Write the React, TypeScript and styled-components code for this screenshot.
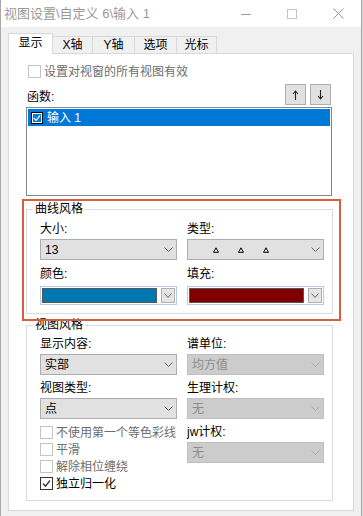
import React from 'react';
import styled, { createGlobalStyle } from 'styled-components';

const GlobalStyle = createGlobalStyle`
  html, body { margin: 0; padding: 0; background: #d6d6d6; }
  body {
    font-family: "Liberation Sans", "Noto Sans CJK SC", sans-serif;
    font-size: 12px;
    line-height: 16px;
    color: #000;
  }
  * { box-sizing: border-box; }
`;

const Window = styled.div`
  width: 362px;
  height: 516px;
  background: #f0f0f0;
  border-left: 1px solid #a9a9a9;
  border-right: 1px solid #a9a9a9;
  overflow: hidden;
`;

const TitleBar = styled.div`
  height: 27px;
  background: #fff;
  display: flex;
  align-items: center;
`;

const Title = styled.div`
  flex: 1;
  padding-left: 3px;
  font-size: 13px;
  color: #9a9a9a;
  white-space: nowrap;
`;

const CaptionButton = styled.div`
  width: 46px;
  height: 27px;
  display: flex;
  align-items: center;
  justify-content: center;
`;

const DialogBody = styled.div`
  padding: 6px 0 0 7px;
`;

const TabStrip = styled.div`
  display: flex;
  align-items: flex-end;
  height: 21px;
  margin-bottom: -1px;
  position: relative;
  z-index: 1;
`;

const Tab = styled.div<{ $active?: boolean; $w: number }>`
  width: ${(p) => p.$w}px;
  height: ${(p) => (p.$active ? 21 : 18)}px;
  background: ${(p) => (p.$active ? '#fff' : '#f0f0f0')};
  border: 1px solid #d9d9d9;
  border-bottom: ${(p) => (p.$active ? 'none' : '1px solid #d9d9d9')};
  border-left: ${(p) => (p.$active ? '1px solid #d9d9d9' : 'none')};
  display: flex;
  align-items: center;
  justify-content: center;
  padding-bottom: ${(p) => (p.$active ? 2 : 0)}px;
  white-space: nowrap;
`;

const TabPanel = styled.div`
  width: 346px;
  height: 458px;
  background: #fff;
  border: 1px solid #d9d9d9;
  padding: 9px 20px 0 17px;
  display: flex;
  flex-direction: column;
`;

const CheckRow = styled.div<{ $disabled?: boolean; $indent?: number }>`
  display: flex;
  align-items: center;
  gap: 3px;
  height: 17px;
  padding-left: ${(p) => p.$indent ?? 0}px;
  color: ${(p) => (p.$disabled ? '#6d6d6d' : '#000')};
  white-space: nowrap;
`;

const CheckBox = styled.span<{ $disabled?: boolean }>`
  width: 13px;
  height: 13px;
  flex: none;
  background: #fff;
  border: 1px solid ${(p) => (p.$disabled ? '#c4c4c4' : '#333')};
  display: flex;
  align-items: center;
  justify-content: center;
`;

const ListHeader = styled.div`
  width: 305px;
  margin-top: 4px;
  display: flex;
  justify-content: space-between;
  align-items: flex-end;
  padding-left: 1px;
`;

const ArrowButtons = styled.div`
  display: flex;
  gap: 4px;
`;

const ArrowButton = styled.div`
  width: 21px;
  height: 21px;
  background: #e1e1e1;
  border: 1px solid #adadad;
  display: flex;
  align-items: center;
  justify-content: center;
`;

const ListBox = styled.div`
  margin-top: 2px;
  width: 306px;
  height: 89px;
  border: 1px solid #828790;
  padding: 1px;
  background: #fff;
`;

const ListItem = styled.div`
  height: 17px;
  background: #0078d7;
  color: #fff;
  display: flex;
  align-items: center;
  gap: 4px;
  padding-left: 3px;
`;

const ItemCheck = styled.span`
  width: 12px;
  height: 12px;
  border: 1px solid #000;
  box-shadow: inset 0 0 0 1px #fff;
  background: #0078d7;
  display: flex;
  align-items: center;
  justify-content: center;
`;

const Highlight = styled.div`
  position: relative;
  margin-top: 13px;
  width: 307px;
`;

const Annotation = styled.div`
  position: absolute;
  left: -4px;
  top: -10px;
  width: 319px;
  height: 122px;
  border: 2px solid #d6603f;
  pointer-events: none;
  z-index: 2;
`;

const GroupBox = styled.div<{ $mt?: number }>`
  width: 307px;
  margin-top: ${(p) => p.$mt ?? 0}px;
  border: 1px solid #dcdcdc;
  padding: 0 8px 8px 13px;
  display: flex;
  flex-direction: column;
`;

const GroupTitle = styled.div`
  align-self: flex-start;
  margin: -9px 0 0 -7px;
  padding: 0 2px;
  background: #fff;
  line-height: 16px;
`;

const FieldGrid = styled.div<{ $rowGap: number; $mt: number }>`
  display: grid;
  grid-template-columns: 137px 137px;
  column-gap: 10px;
  row-gap: ${(p) => p.$rowGap}px;
  margin-top: ${(p) => p.$mt}px;
`;

const Field = styled.div`
  display: flex;
  flex-direction: column;
  gap: 2px;
`;

const FieldLabel = styled.div`
  height: 16px;
  white-space: nowrap;
`;

const Combo = styled.div<{ $disabled?: boolean }>`
  height: 21px;
  background: ${(p) => (p.$disabled ? '#cccccc' : '#e1e1e1')};
  border: 1px solid ${(p) => (p.$disabled ? '#bfbfbf' : '#adadad')};
  color: ${(p) => (p.$disabled ? '#8c8c8c' : '#000')};
  display: flex;
  align-items: center;
  padding-left: 4px;
`;

const ComboValue = styled.div`
  flex: 1;
  display: flex;
  align-items: center;
  white-space: nowrap;
`;

const MarkerRow = styled.div`
  flex: 1;
  display: flex;
  align-items: center;
  gap: 19px;
  padding-left: 21px;
`;

const ComboArrow = styled.div`
  width: 16px;
  display: flex;
  align-items: center;
  justify-content: center;
`;

const ColorCombo = styled.div`
  margin-top: 2px;
  height: 19px;
  border: 1px solid #b8cae8;
  background: #fff;
  padding: 1px;
  display: flex;
  gap: 4px;
`;

const Swatch = styled.div<{ $color: string }>`
  flex: 1;
  background: ${(p) => p.$color};
  border: 1px solid #575757;
`;

const SwatchButton = styled.div`
  width: 14px;
  background: #e5e5e5;
  border: 1px solid #b0b0b0;
  display: flex;
  align-items: center;
  justify-content: center;
`;

const CheckList = styled.div`
  display: flex;
  flex-direction: column;
`;

const Chevron = ({ disabled, w = 9 }: { disabled?: boolean; w?: number }) => (
  <svg width={w} height={5} viewBox={`0 0 ${w} 5`}>
    <polyline
      points={`0.5,0.5 ${w / 2},4.5 ${w - 0.5},0.5`}
      fill="none"
      stroke={disabled ? '#aaaaaa' : '#606060'}
      strokeWidth="1"
    />
  </svg>
);

const Marker = () => (
  <svg width={6} height={6} viewBox="0 0 6 6">
    <polygon points="3,0.8 5.5,5.3 0.5,5.3" fill="none" stroke="#000" strokeWidth="1" />
  </svg>
);

const Tick = ({ color = '#333', size = 9 }: { color?: string; size?: number }) => (
  <svg width={size} height={size} viewBox="0 0 9 9">
    <polyline points="1,4.5 3.5,7.2 8,1.5" fill="none" stroke={color} strokeWidth="1.3" />
  </svg>
);

const ComboBox = ({ value, disabled }: { value: string; disabled?: boolean }) => (
  <Combo $disabled={disabled}>
    <ComboValue>{value}</ComboValue>
    <ComboArrow>
      <Chevron disabled={disabled} />
    </ComboArrow>
  </Combo>
);

const ColorBox = ({ color }: { color: string }) => (
  <ColorCombo>
    <Swatch $color={color} />
    <SwatchButton>
      <Chevron w={8} />
    </SwatchButton>
  </ColorCombo>
);

export default function App() {
  return (
    <>
      <GlobalStyle />
      <Window>
        <TitleBar>
          <Title>视图设置\自定义 6\输入 1</Title>
          <CaptionButton>
            <svg width="10" height="10" viewBox="0 0 10 10">
              <line x1="0" y1="5.5" x2="10" y2="5.5" stroke="#9a9a9a" strokeWidth="1" />
            </svg>
          </CaptionButton>
          <CaptionButton>
            <svg width="10" height="10" viewBox="0 0 10 10">
              <rect x="0.5" y="0.5" width="9" height="9" fill="none" stroke="#c4c4c4" strokeWidth="1" />
            </svg>
          </CaptionButton>
          <CaptionButton>
            <svg width="11" height="11" viewBox="0 0 11 11">
              <path d="M0.5 0.5 L10.5 10.5 M10.5 0.5 L0.5 10.5" stroke="#9a9a9a" strokeWidth="1" />
            </svg>
          </CaptionButton>
        </TitleBar>
        <DialogBody>
          <TabStrip>
            <Tab $active $w={45}>显示</Tab>
            <Tab $w={40}>X轴</Tab>
            <Tab $w={42}>Y轴</Tab>
            <Tab $w={42}>选项</Tab>
            <Tab $w={40}>光标</Tab>
          </TabStrip>
          <TabPanel>
            <CheckRow $disabled $indent={2}>
              <CheckBox $disabled />
              设置对视窗的所有视图有效
            </CheckRow>
            <ListHeader>
              <span>函数:</span>
              <ArrowButtons>
                <ArrowButton>
                  <svg width="7" height="10" viewBox="0 0 7 10">
                    <path d="M3.5 1 V10 M1 4 L3.5 1 L6 4" fill="none" stroke="#222" strokeWidth="1.1" />
                  </svg>
                </ArrowButton>
                <ArrowButton>
                  <svg width="7" height="10" viewBox="0 0 7 10">
                    <path d="M3.5 0 V9 M1 6 L3.5 9 L6 6" fill="none" stroke="#222" strokeWidth="1.1" />
                  </svg>
                </ArrowButton>
              </ArrowButtons>
            </ListHeader>
            <ListBox>
              <ListItem>
                <ItemCheck>
                  <Tick color="#fff" size={8} />
                </ItemCheck>
                输入 1
              </ListItem>
            </ListBox>
            <Highlight>
              <GroupBox>
                <GroupTitle>曲线风格</GroupTitle>
                <FieldGrid $rowGap={6} $mt={4}>
                  <Field>
                    <FieldLabel>大小:</FieldLabel>
                    <ComboBox value="13" />
                  </Field>
                  <Field>
                    <FieldLabel>类型:</FieldLabel>
                    <Combo>
                      <MarkerRow>
                        <Marker />
                        <Marker />
                        <Marker />
                      </MarkerRow>
                      <ComboArrow>
                        <Chevron />
                      </ComboArrow>
                    </Combo>
                  </Field>
                  <Field>
                    <FieldLabel>颜色:</FieldLabel>
                    <ColorBox color="#0077b0" />
                  </Field>
                  <Field>
                    <FieldLabel>填充:</FieldLabel>
                    <ColorBox color="#800000" />
                  </Field>
                </FieldGrid>
              </GroupBox>
              <Annotation />
            </Highlight>
            <GroupBox $mt={11}>
              <GroupTitle>视图风格</GroupTitle>
              <FieldGrid $rowGap={5} $mt={3}>
                <Field>
                  <FieldLabel>显示内容:</FieldLabel>
                  <ComboBox value="实部" />
                </Field>
                <Field>
                  <FieldLabel>谱单位:</FieldLabel>
                  <ComboBox value="均方值" disabled />
                </Field>
                <Field>
                  <FieldLabel>视图类型:</FieldLabel>
                  <ComboBox value="点" />
                </Field>
                <Field>
                  <FieldLabel>生理计权:</FieldLabel>
                  <ComboBox value="无" disabled />
                </Field>
                <CheckList>
                  <CheckRow $disabled>
                    <CheckBox $disabled />
                    不使用第一个等色彩线
                  </CheckRow>
                  <CheckRow $disabled>
                    <CheckBox $disabled />
                    平滑
                  </CheckRow>
                  <CheckRow $disabled>
                    <CheckBox $disabled />
                    解除相位缠绕
                  </CheckRow>
                  <CheckRow>
                    <CheckBox>
                      <Tick />
                    </CheckBox>
                    独立归一化
                  </CheckRow>
                </CheckList>
                <Field>
                  <FieldLabel>jw计权:</FieldLabel>
                  <ComboBox value="无" disabled />
                </Field>
              </FieldGrid>
            </GroupBox>
          </TabPanel>
        </DialogBody>
      </Window>
    </>
  );
}
